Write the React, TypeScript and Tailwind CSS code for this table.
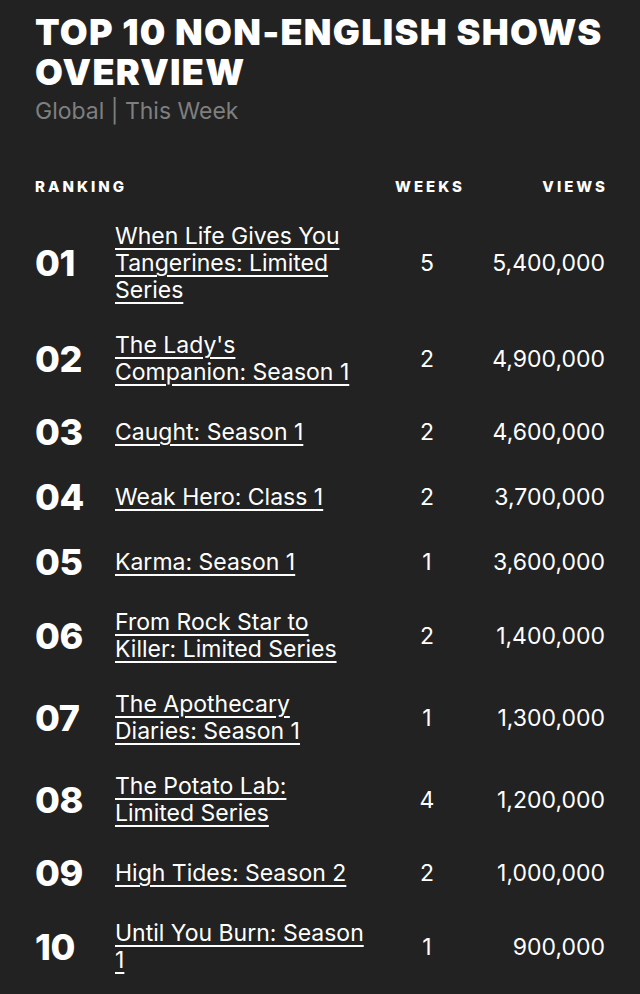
import React from 'react';

interface Show {
  rank: string;
  title: string[];
  weeks: number;
  views: string;
}

const shows: Show[] = [
  { rank: '01', title: ['When Life Gives You', 'Tangerines: Limited', 'Series'], weeks: 5, views: '5,400,000' },
  { rank: '02', title: ["The Lady's", 'Companion: Season 1'], weeks: 2, views: '4,900,000' },
  { rank: '03', title: ['Caught: Season 1'], weeks: 2, views: '4,600,000' },
  { rank: '04', title: ['Weak Hero: Class 1'], weeks: 2, views: '3,700,000' },
  { rank: '05', title: ['Karma: Season 1'], weeks: 1, views: '3,600,000' },
  { rank: '06', title: ['From Rock Star to', 'Killer: Limited Series'], weeks: 2, views: '1,400,000' },
  { rank: '07', title: ['The Apothecary', 'Diaries: Season 1'], weeks: 1, views: '1,300,000' },
  { rank: '08', title: ['The Potato Lab:', 'Limited Series'], weeks: 4, views: '1,200,000' },
  { rank: '09', title: ['High Tides: Season 2'], weeks: 2, views: '1,000,000' },
  { rank: '10', title: ['Until You Burn: Season', '1'], weeks: 1, views: '900,000' },
];

const Row = ({ show }: { show: Show }) => (
  <div className="flex items-center py-[14px]">
    <div className="w-[80px] shrink-0 text-[36px] leading-[37px] font-extrabold tracking-[-0.01em]">{show.rank}</div>
    <div className="flex-1 text-[23px] leading-[27px]">
      <a href="#" className="underline decoration-2 underline-offset-[4px]">
        {show.title.map((line, i) => (
          <React.Fragment key={i}>
            {i > 0 && <br />}
            {line}
          </React.Fragment>
        ))}
      </a>
    </div>
    <div className="w-[70px] shrink-0 text-center text-[23px] leading-[27px]">{show.weeks}</div>
    <div className="w-[143px] shrink-0 text-right text-[23px] leading-[27px]">{show.views}</div>
  </div>
);

export default function App() {
  return (
    <div className="min-h-[994px] bg-[#222222] text-white px-[35px] pt-[12px] pb-6 font-['Inter',sans-serif]">
      <h1 className="text-[36px] leading-[40px] font-black uppercase tracking-[0.035em]">
        Top 10 Non-English Shows<br />Overview
      </h1>
      <p className="mt-[5px] text-[23px] leading-[28px] text-[#7f7f7f]">Global | This Week</p>

      <div className="mt-[52px] flex text-[15px] leading-[20px] font-extrabold tracking-[0.2em]">
        <div className="flex-1">RANKING</div>
        <div className="w-[70px] pl-[3px] text-center">WEEKS</div>
        <div className="w-[146px] text-right -mr-[3px]">VIEWS</div>
      </div>

      <div className="mt-[12px]">
        {shows.map((show) => (
          <Row key={show.rank} show={show} />
        ))}
      </div>
    </div>
  );
}
